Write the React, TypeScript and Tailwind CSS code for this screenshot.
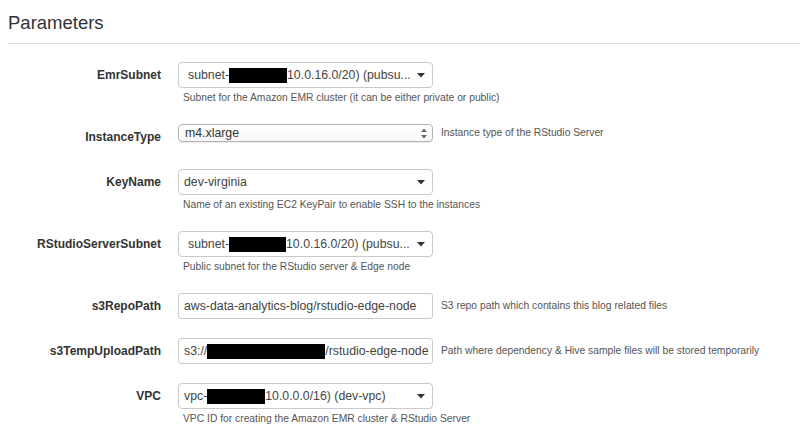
import React from "react";

const Caret = () => (
  <svg width="8" height="5" viewBox="0 0 8 5" className="shrink-0">
    <path d="M0 0 L8 0 L4 4.5 Z" fill="#333" />
  </svg>
);

const UpDown = () => (
  <svg width="6" height="11" viewBox="0 0 6 11" className="shrink-0">
    <path d="M0 4 L6 4 L3 0.5 Z" fill="#666" />
    <path d="M0 7 L6 7 L3 10.5 Z" fill="#666" />
  </svg>
);

const Redact = ({ w }: { w: number }) => (
  <span className="inline-block h-[15px] bg-black align-middle" style={{ width: w }} />
);

function SelectBox({ children, pl = "pl-[5px]" }: { children: React.ReactNode; pl?: string }) {
  return (
    <div className={`flex h-[26px] w-[255px] items-center justify-between rounded-[4px] border border-[#cacaca] bg-white ${pl} pr-[7px]`}>
      <div className="flex items-center whitespace-nowrap text-[12.3px] text-[#444]">{children}</div>
      <Caret />
    </div>
  );
}

function TextBox({ children }: { children: React.ReactNode }) {
  return (
    <div className="flex h-[26px] w-[255px] items-center overflow-hidden rounded-[3px] border border-[#cacaca] bg-white pl-[5px]">
      <div className="flex items-center whitespace-nowrap text-[12.3px] text-[#444]">{children}</div>
    </div>
  );
}

function Row({
  label,
  control,
  help,
  helpRight = false,
}: {
  label: string;
  control: React.ReactNode;
  help: string;
  helpRight?: boolean;
}) {
  return (
    <div className="flex items-start">
      <div className="flex h-[26px] w-[161px] items-center justify-end text-[12px] font-bold text-[#333]">
        {label}
      </div>
      <div className="ml-[17px]">
        {helpRight ? (
          <div className="flex items-center">
            {control}
            <div className="ml-[8px] whitespace-nowrap text-[10.3px] leading-[14px] text-[#555]">
              {help}
            </div>
          </div>
        ) : (
          <div className="flex flex-col">
            {control}
            <div className="mt-[3px] h-[14px] pl-[5px] text-[10.3px] leading-[14px] whitespace-nowrap text-[#555]">
              {help}
            </div>
          </div>
        )}
      </div>
    </div>
  );
}

export default function App() {
  return (
    <div
      className="h-[441px] w-[800px] overflow-hidden bg-white"
      style={{ fontFamily: '"Liberation Sans", Arial, Helvetica, sans-serif' }}
    >
      <div className="ml-[8px] border-b border-[#dddddd] pt-[11px] pb-[8px]">
        <h1 className="h-[24px] text-[18.5px] leading-[24px] font-normal text-[#333]">Parameters</h1>
      </div>

      <div className="mt-[18px] flex flex-col gap-[19px]">
        <Row
          label="EmrSubnet"
          control={
            <SelectBox pl="pl-[9px]">
              <span>subnet-</span>
              <Redact w={58} />
              <span>10.0.16.0/20) (pubsu...</span>
            </SelectBox>
          }
          help="Subnet for the Amazon EMR cluster (it can be either private or public)"
        />

        <Row
          label="InstanceType"
          helpRight
          control={
            <div className="flex h-[18px] w-[255px] items-center justify-between rounded-[4px] border border-[#b3b3b3] bg-gradient-to-b from-white to-[#f7f7f7] pl-[6px] pr-[5px] shadow-[0_1px_1px_rgba(0,0,0,0.08)]">
              <span className="text-[12.3px] leading-none text-[#333]">m4.xlarge</span>
              <UpDown />
            </div>
          }
          help="Instance type of the RStudio Server"
        />

        <Row
          label="KeyName"
          control={
            <SelectBox>
              <span>dev-virginia</span>
            </SelectBox>
          }
          help="Name of an existing EC2 KeyPair to enable SSH to the instances"
        />

        <Row
          label="RStudioServerSubnet"
          control={
            <SelectBox pl="pl-[9px]">
              <span>subnet-</span>
              <Redact w={57} />
              <span>10.0.16.0/20) (pubsu...</span>
            </SelectBox>
          }
          help="Public subnet for the RStudio server & Edge node"
        />

        <Row
          label="s3RepoPath"
          helpRight
          control={
            <TextBox>
              <span>aws-data-analytics-blog/rstudio-edge-node</span>
            </TextBox>
          }
          help="S3 repo path which contains this blog related files"
        />

        <Row
          label="s3TempUploadPath"
          helpRight
          control={
            <TextBox>
              <span>s3://</span>
              <Redact w={118} />
              <span>/rstudio-edge-node</span>
            </TextBox>
          }
          help="Path where dependency & Hive sample files will be stored temporarily"
        />

        <Row
          label="VPC"
          control={
            <SelectBox>
              <span>vpc-</span>
              <Redact w={58} />
              <span>10.0.0.0/16) (dev-vpc)</span>
            </SelectBox>
          }
          help="VPC ID for creating the Amazon EMR cluster & RStudio Server"
        />
      </div>
    </div>
  );
}
